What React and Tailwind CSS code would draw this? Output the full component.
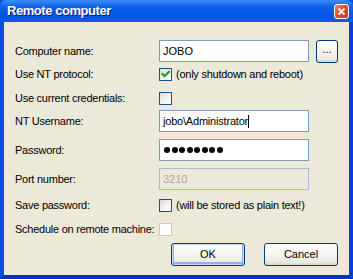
import React from "react";

const font = { fontFamily: '"Liberation Sans", Arial, sans-serif' };

function Label({ children }) {
  return <div className="w-[144px] shrink-0 text-[11px] tracking-[-0.25px] text-black whitespace-nowrap">{children}</div>;
}

function Checkbox({ checked, disabled }) {
  if (disabled) {
    return <div className="w-[13px] h-[13px] border border-[#cac8bb] bg-white shrink-0" />;
  }
  return (
    <div className="w-[13px] h-[13px] border border-[#1c5180] bg-[linear-gradient(135deg,#dcdcd7_0%,#f4f4f0_60%,#ffffff_100%)] shrink-0 flex items-center justify-center">
      {checked && (
        <svg width="9" height="9" viewBox="0 0 9 9">
          <path d="M1.5 4 L3.5 6.2 L7.8 1.8" fill="none" stroke="#21a121" strokeWidth="2.2" strokeLinecap="square" />
        </svg>
      )}
    </div>
  );
}

function Input({ children, disabled }) {
  return (
    <div
      className={
        disabled
          ? "w-[150px] h-[22px] border border-[#a9bbd0] bg-[#ece9d8] text-[#aca899] text-[11px] pl-[3px] flex items-center"
          : "w-[150px] h-[22px] border border-[#7f9db9] bg-white text-black text-[11px] pl-[3px] flex items-center"
      }
    >
      {children}
    </div>
  );
}

function XPButton({ children, def, className }) {
  return (
    <div
      className={
        "h-[23px] rounded-[3px] border border-[#003c74] bg-[linear-gradient(to_bottom,#ffffff_0%,#f6f6f3_40%,#eceae3_85%,#d8d3c7_100%)] text-[11px] text-black flex items-center justify-center " +
        (def ? "shadow-[inset_0_0_0_1px_#c4d7f9,inset_0_-1px_0_2px_#8eb0ec] " : "") +
        className
      }
    >
      {children}
    </div>
  );
}

const dots = [0, 1, 2, 3, 4, 5, 6, 7];

export default function App() {
  return (
    <div className="w-[353px] h-[279px] flex flex-col bg-[#0a48dc]" style={font}>
      {/* title bar */}
      <div className="h-[22px] shrink-0 flex items-center justify-between pl-[7px] pr-[4px] rounded-t-[6px] bg-[linear-gradient(to_bottom,#3d8cf6_0%,#2a7cf2_12%,#0f62ea_30%,#0559e6_55%,#0456e4_80%,#0a5ce8_100%)]">
        <span className="text-white font-bold text-[13px] tracking-[-0.45px] [text-shadow:1px_1px_0_#0a1883]">Remote computer</span>
        <div className="w-[15px] h-[15px] rounded-[3px] border border-white bg-[linear-gradient(135deg,#f08a6a_0%,#e0502c_45%,#c93a1a_100%)] flex items-center justify-center mt-[1px]">
          <svg width="9" height="9" viewBox="0 0 9 9">
            <path d="M1.5 1.5 L7.5 7.5 M7.5 1.5 L1.5 7.5" stroke="white" strokeWidth="1.8" />
          </svg>
        </div>
      </div>

      {/* body */}
      <div className="flex-1 flex flex-col border-l-[4px] border-r-[4px] border-b-[4px] border-l-[#0a4fe0] border-r-[#0641d6] border-b-[#0534c4] bg-[#ece9d8] pl-[11px] pr-[11px] pt-[18px]">
        <div className="flex items-center h-[22px]">
          <Label>Computer name:</Label>
          <Input>JOBO</Input>
          <XPButton className="w-[22px] h-[22px] ml-[7px] items-end pb-[4px]">...</XPButton>
        </div>

        <div className="flex items-center h-[13px] mt-[6px]">
          <Label>Use NT protocol:</Label>
          <Checkbox checked />
          <span className="ml-[4px] text-[11px] tracking-[-0.25px] whitespace-nowrap">(only shutdown and reboot)</span>
        </div>

        <div className="flex items-center h-[13px] mt-[11px]">
          <Label>Use current credentials:</Label>
          <Checkbox />
        </div>

        <div className="flex items-center h-[22px] mt-[5px]">
          <Label>NT Username:</Label>
          <Input>
            <span className="tracking-[-0.2px]">jobo\Administrator</span>
            <span className="w-px h-[13px] bg-black" />
          </Input>
        </div>

        <div className="flex items-center h-[22px] mt-[7px]">
          <Label>Password:</Label>
          <Input>
            <div className="flex gap-[1.5px] pl-[1px]">
              {dots.map((d) => (
                <span key={d} className="w-[6px] h-[6px] rounded-full bg-black" />
              ))}
            </div>
          </Input>
        </div>

        <div className="flex items-center h-[22px] mt-[7px]">
          <Label>Port number:</Label>
          <Input disabled>3210</Input>
        </div>

        <div className="flex items-center h-[13px] mt-[9px]">
          <Label>Save password:</Label>
          <Checkbox />
          <span className="ml-[4px] text-[11px] tracking-[-0.25px] whitespace-nowrap">(will be stored as plain text!)</span>
        </div>

        <div className="flex items-center h-[13px] mt-[11px]">
          <Label>Schedule on remote machine:</Label>
          <Checkbox disabled />
        </div>

        <div className="flex justify-end gap-[19px] mt-[7px]">
          <XPButton def className="w-[74px]">OK</XPButton>
          <XPButton className="w-[74px]">Cancel</XPButton>
        </div>
      </div>
    </div>
  );
}
